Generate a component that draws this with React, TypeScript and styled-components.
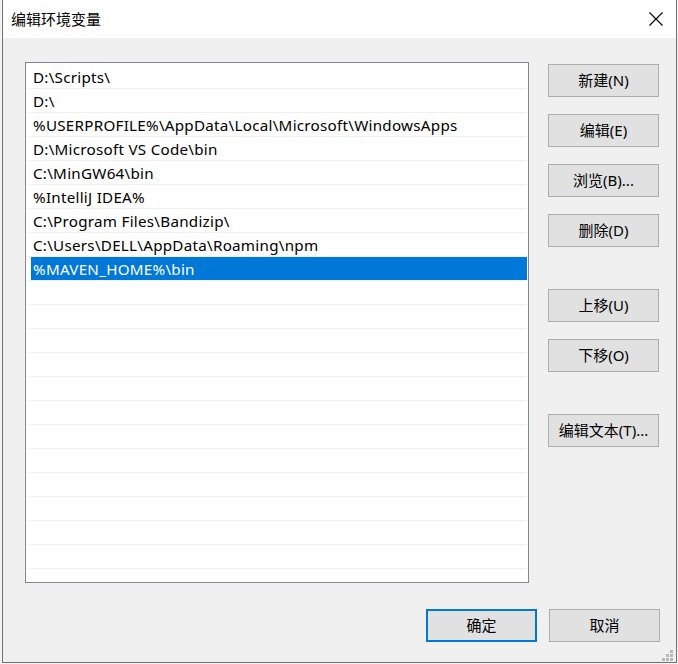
import React from "react";
import styled, { createGlobalStyle } from "styled-components";

const Global = createGlobalStyle`
  html, body { margin: 0; padding: 0; background: #f4f4f4; }
  body { font-family: "Noto Sans", "Noto Sans CJK SC", sans-serif; }
  * { box-sizing: border-box; }
`;

const FONT = `"Noto Sans", "Noto Sans CJK SC", sans-serif`;

const Window = styled.div`
  position: relative;
  margin-left: 2px;
  width: 675px;
  height: 663px;
  border: 1px solid #717171;
  border-top: none;
  background: #f0f0f0;
  display: flex;
  flex-direction: column;
  font-family: ${FONT};
  font-size: 15px;
  color: #000;
`;

const TitleBar = styled.div`
  height: 38px;
  background: #fff;
  display: flex;
  align-items: center;
  justify-content: space-between;
  padding: 0 13px 0 8px;
`;

const Title = styled.div`
  font-family: "Noto Sans CJK SC", sans-serif;
  font-size: 15px;
  line-height: 20px;
  margin-top: -1px;
`;

const CloseBox = styled.div`
  width: 14px;
  height: 14px;
  display: flex;
  margin-top: -1px;
`;

const Body = styled.div`
  flex: 1;
  display: flex;
  flex-direction: column;
  padding: 24px 16px 20px 22px;
`;

const Main = styled.div`
  display: flex;
  gap: 19px;
  height: 521px;
`;

const ListBox = styled.div`
  width: 504px;
  height: 521px;
  border: 1px solid #828790;
  background: #fff;
  padding: 2px 1px 0 1px;
  overflow: hidden;
`;

const Row = styled.div`
  height: 24px;
  border-bottom: 1px solid #f0f0f0;
  display: flex;
`;

const Cell = styled.div<{ $selected?: boolean }>`
  flex: 1;
  margin-left: 4px;
  height: 23px;
  padding: 1px 0 0 2px;
  line-height: 22px;
  font-size: 15.2px;
  letter-spacing: 0.26px;
  white-space: nowrap;
  background: ${(p) => (p.$selected ? "#0078d7" : "transparent")};
  color: ${(p) => (p.$selected ? "#fff" : "#000")};
`;

const ButtonColumn = styled.div`
  display: flex;
  flex-direction: column;
  gap: 17px;
  padding-top: 2px;
`;

const Button = styled.button<{ $gapBefore?: boolean; $default?: boolean }>`
  width: 111px;
  height: 33px;
  margin-top: ${(p) => (p.$gapBefore ? "25px" : "0")};
  background: #e1e1e1;
  border: ${(p) => (p.$default ? "2px solid #0078d7" : "1px solid #adadad")};
  border-radius: 0;
  font-family: ${FONT};
  font-size: 15px;
  line-height: 20px;
  color: #000;
  padding: 0 0 1px 0;
  display: flex;
  align-items: center;
  justify-content: center;
`;

const Footer = styled.div`
  margin-top: 26px;
  display: flex;
  justify-content: flex-end;
  gap: 12px;
`;

const Grip = styled.div`
  position: absolute;
  right: 3px;
  bottom: 1px;
  width: 11px;
  height: 11px;
  display: grid;
  grid-template-columns: repeat(3, 3px);
  grid-template-rows: repeat(3, 3px);
  gap: 1px;
`;

const Dot = styled.span<{ $on?: boolean }>`
  background: ${(p) => (p.$on ? "#b8b8b8" : "transparent")};
`;

const paths = [
  "D:\\Scripts\\",
  "D:\\",
  "%USERPROFILE%\\AppData\\Local\\Microsoft\\WindowsApps",
  "D:\\Microsoft VS Code\\bin",
  "C:\\MinGW64\\bin",
  "%IntelliJ IDEA%",
  "C:\\Program Files\\Bandizip\\",
  "C:\\Users\\DELL\\AppData\\Roaming\\npm",
  "%MAVEN_HOME%\\bin",
];

const TOTAL_ROWS = 22;

export default function App() {
  const rows = Array.from({ length: TOTAL_ROWS }, (_, i) => paths[i] ?? "");
  const gripOn = [false, false, true, false, true, true, true, true, true];
  return (
    <>
      <Global />
      <Window>
        <TitleBar>
          <Title>编辑环境变量</Title>
          <CloseBox>
            <svg width="14" height="14" viewBox="0 0 14 14">
              <path d="M0.5 0.5 L13.5 13.5 M13.5 0.5 L0.5 13.5" stroke="#000" strokeWidth="1.1" fill="none" />
            </svg>
          </CloseBox>
        </TitleBar>
        <Body>
          <Main>
            <ListBox>
              {rows.map((t, i) => (
                <Row key={i}>
                  <Cell $selected={i === 8}>{t}</Cell>
                </Row>
              ))}
            </ListBox>
            <ButtonColumn>
              <Button>新建(N)</Button>
              <Button>编辑(E)</Button>
              <Button>浏览(B)...</Button>
              <Button>删除(D)</Button>
              <Button $gapBefore>上移(U)</Button>
              <Button>下移(O)</Button>
              <Button $gapBefore>编辑文本(T)...</Button>
            </ButtonColumn>
          </Main>
          <Footer>
            <Button $default>确定</Button>
            <Button>取消</Button>
          </Footer>
        </Body>
        <Grip>
          {gripOn.map((on, i) => (
            <Dot key={i} $on={on} />
          ))}
        </Grip>
      </Window>
    </>
  );
}
